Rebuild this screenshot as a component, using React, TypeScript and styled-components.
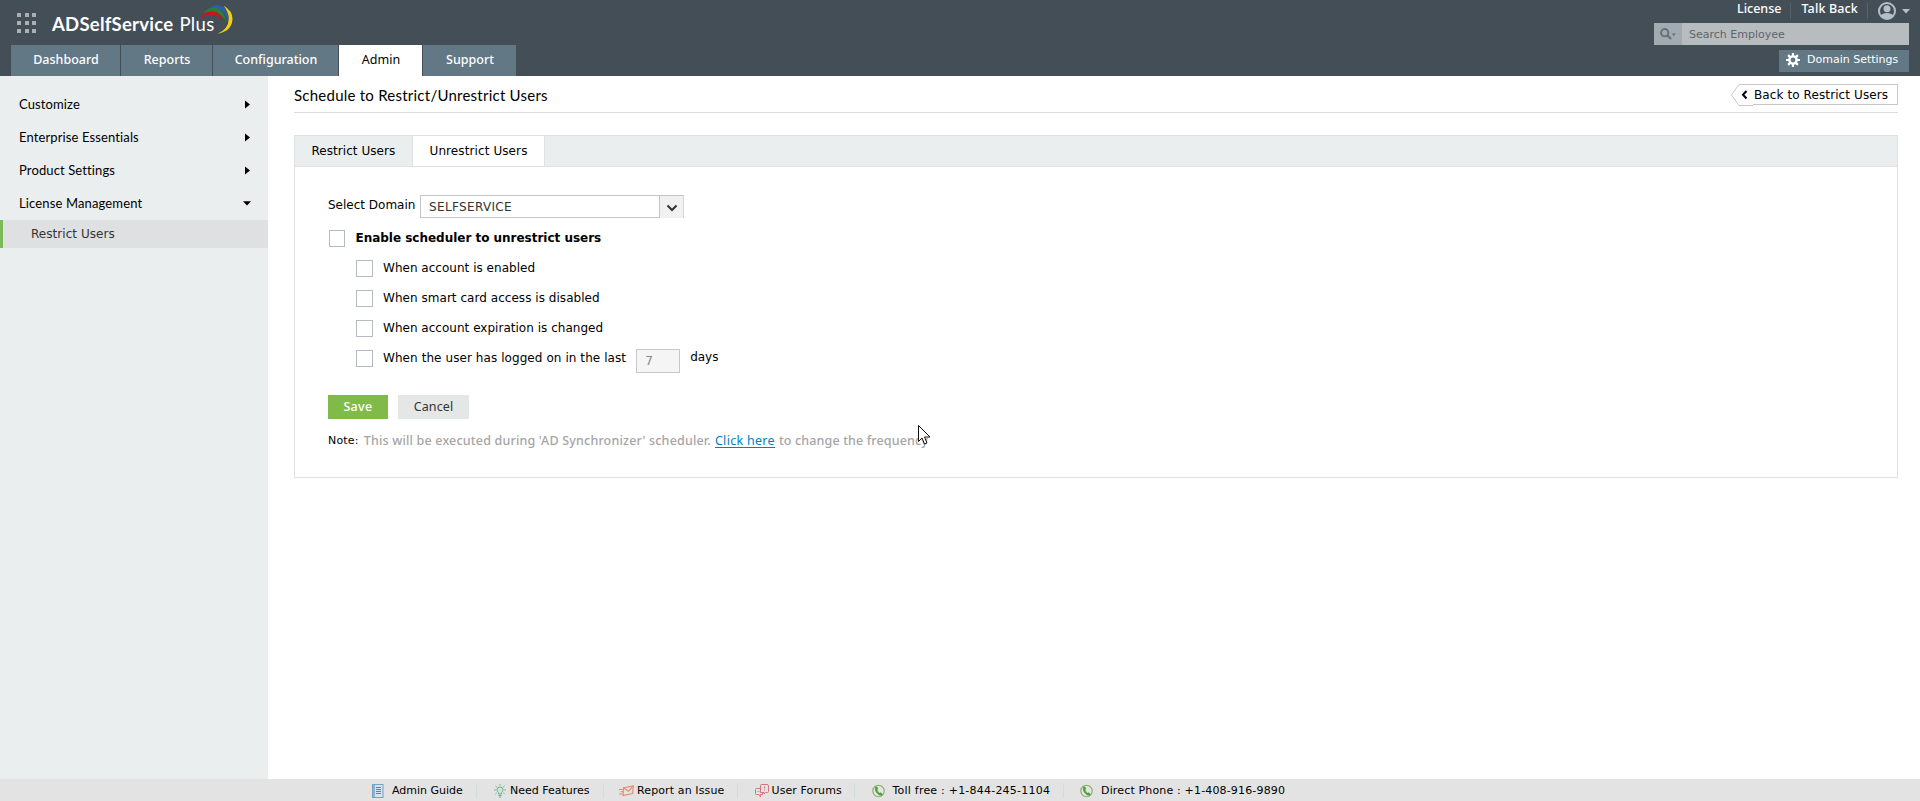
import React from "react";
import styled, { createGlobalStyle } from "styled-components";

const verdana = `"DejaVu Sans", "Liberation Sans", sans-serif`;
const lato = `Lato, "Liberation Sans", sans-serif`;
const tahoma = `"Noto Sans", "Open Sans", sans-serif`;

const GlobalStyle = createGlobalStyle`
  * { box-sizing: border-box; }
  html, body { margin: 0; padding: 0; }
  body { background: #fff; font: 12px/16px ${verdana}; color: #000; overflow: hidden; }
`;

const Page = styled.div`height: 801px; display: flex; flex-direction: column;`;

const Label = styled.span<{ $ls?: number; $size?: number; $font?: string; $weight?: number; $color?: string }>`
  white-space: nowrap;
  letter-spacing: ${p => p.$ls ?? 0}px;
  font-size: ${p => p.$size ?? 12}px;
  font-family: ${p => p.$font ?? verdana};
  font-weight: ${p => p.$weight ?? 400};
  ${p => p.$color && `color: ${p.$color};`}
`;

/* ---------- header ---------- */
const Header = styled.header`
  height: 76px; flex: none; background: #434e56; color: #fff;
  display: flex; justify-content: space-between;
`;
const HeaderLeft = styled.div`display: flex; flex-direction: column; justify-content: space-between; padding-left: 11px;`;
const Brand = styled.div`height: 45px; display: flex; align-items: flex-start; padding-left: 6px;`;
const AppGrid = styled.div`
  margin-top: 13px; width: 19px; display: grid; grid-template-columns: repeat(3, 4px);
  grid-auto-rows: 4px; gap: 4px 3.5px;
`;
const Dot = styled.i`background: #a9afb5;`;
const BrandName = styled.div`margin: 12px 0 0 16px; height: 24px; line-height: 24px; display: flex; gap: 6px;`;
const Swirl = styled.svg`margin: 4px 0 0 -16px;`;
const Tabs = styled.nav`display: flex; gap: 1px; height: 31px;`;
const Tab = styled.a<{ $w: number; $active?: boolean }>`
  width: ${p => p.$w}px; height: 31px; padding: 0 0 2px 1px; display: flex; align-items: center; justify-content: center;
  background: ${p => (p.$active ? "#fff" : "#627885")}; color: ${p => (p.$active ? "#000" : "#fff")};
`;
const HeaderRight = styled.div`display: flex; flex-direction: column; align-items: flex-end; padding-right: 11px;`;
const UserBar = styled.div`height: 23px; display: flex; align-items: flex-start; padding-top: 1px; margin-right: -1px;`;
const BarSep = styled.i<{ $l: number; $r: number }>`
  width: 1px; height: 16px; margin: 2px ${p => p.$r}px 0 ${p => p.$l}px; background: #56626a;
`;
const Search = styled.div`width: 255px; height: 22px; display: flex; background: #b7bcbf;`;
const SearchIcon = styled.div`width: 28px; background: #a2abb0; display: flex; align-items: center; justify-content: center;`;
const SearchText = styled.div`padding: 3px 0 0 7px;`;
const DomainButton = styled.div`
  width: 130px; height: 22px; margin-top: 5px; padding: 0 0 2px 7px; background: #627885;
  display: flex; align-items: center; gap: 7px;
`;

/* ---------- body ---------- */
const Body = styled.div`flex: 1; display: flex; min-height: 0;`;
const Sidebar = styled.aside`width: 268px; background: #eaeeef; padding-top: 12px;`;
const MenuItem = styled.div`height: 33px; padding: 0 17px 0 19px; display: flex; align-items: center; justify-content: space-between;`;
const MenuText = styled.div`padding-bottom: 1px;`;
const SubItem = styled.div`
  height: 28px; background: #dfe0e1; border-left: 3px solid #7cb958; padding: 0 0 1px 28px;
  display: flex; align-items: center;
`;
const Arrow = styled.svg<{ $open?: boolean }>`display: block; margin-right: ${p => (p.$open ? 0 : 1)}px;`;
const Main = styled.main`flex: 1; padding: 0 22px 0 26px;`;
const TitleBar = styled.div`
  height: 37px; border-bottom: 1px solid #ddd; display: flex; justify-content: space-between;
`;
const Title = styled.div`padding-top: 9px; line-height: 20px;`;
const Back = styled.div`margin-top: 8px; width: 167px; height: 22px; display: flex;`;
const BackBody = styled.div`
  flex: 1; height: 21px; border: 1px solid #c8c8c8; border-left: 0;
  display: flex; align-items: center; padding-left: 1px;
`;

const Panel = styled.section`margin-top: 22px; height: 343px; border: 1px solid #e0e1e1;`;
const PanelTabs = styled.div`height: 31px; background: #eaeeef; border-bottom: 1px solid #e0e1e1; display: flex;`;
const PanelTab = styled.div<{ $w: number; $active?: boolean }>`
  width: ${p => p.$w}px; height: 30px; padding: 7px 0 0 16.500px;
  background: ${p => (p.$active ? "#fff" : "transparent")};
  ${p => p.$active && "border: 1px solid #e0e1e1; border-width: 0 1px;"}
`;
const Form = styled.div`padding: 28px 0 0 33px;`;
const DomainRow = styled.div`height: 24px; display: flex; gap: 5px;`;
const FieldLabel = styled.div`width: 87px; padding-top: 2px;`;
const Select = styled.div`
  width: 264px; height: 23px; border: 1px solid #c3c6c8; border-right-color: #d4d6d8; display: flex;
`;
const SelectValue = styled.div`flex: 1; padding: 3px 0 0 8px;`;
const SelectButton = styled.div`
  width: 24px; height: 22px; background: #f1f1f1; border-left: 1px solid #c3c6c8;
  display: flex; align-items: center; justify-content: center; padding-top: 2px;
`;
const Checks = styled.div`padding-top: 11px; height: 176px;`;
const CheckRow = styled.div<{ $sub?: boolean }>`
  height: 30px; display: flex; align-items: flex-start; padding-left: ${p => (p.$sub ? 28 : 1)}px;
`;
const Box = styled.span<{ $w: number }>`
  width: ${p => p.$w}px; height: 17px; border: 1px solid #b5babf; background: #fff; flex: none;
  margin-right: ${p => (p.$w === 16 ? 10.5 : 10)}px;
`;
const DaysInput = styled.div`
  width: 44px; height: 24px; margin: -1px 10px 0 10px; border: 1px solid #c5c8ca; background: #f5f5f5;
  padding: 3px 0 0 8px;
`;
const Days = styled.div`margin-top: -1px;`;
const Buttons = styled.div`display: flex; gap: 10px;`;
const Button = styled.div<{ $primary?: boolean }>`
  width: ${p => (p.$primary ? 60 : 71)}px; height: 24px; display: flex; align-items: center; justify-content: center;
  background: ${p => (p.$primary ? "#80bb4a" : "#e4e7e6")};
`;
const Note = styled.div`position: relative; margin-top: 14px; display: flex;`;
const NoteBody = styled.div`margin-left: 5px; display: flex; color: #a5a5a5;`;
const NoteLink = styled.a`color: #0080c0; border-bottom: 1px solid #0080c0; height: 15px; margin: 0 4px; display: flex;`;
const Cursor = styled.svg`position: absolute; left: 590px; top: -8px;`;

/* ---------- footer ---------- */
const Footer = styled.footer`
  height: 22px; flex: none; background: #e3e3e3; display: flex; align-items: center; padding: 1px 0 0 371px;
`;
const FootItem = styled.div<{ $w: number; $gap: number }>`
  width: ${p => p.$w}px; height: 16px; display: flex; align-items: center; flex: none;
  svg { flex: none; margin-right: ${p => p.$gap}px; }
`;
const FootSep = styled.i<{ $r: number }>`
  width: 1px; height: 15px; background: #d0dcdd; margin-right: ${p => p.$r}px; flex: none;
`;

const BookIcon = () => (
  <svg width="13" height="14" viewBox="0 0 13 14" fill="none" stroke="#6fa3c8">
    <rect x="1.500" y=".5" width="10.500" height="13" fill="#d3e4f0" />
    <path d="M3 1v12" strokeWidth="1.500" />
    <path d="M5 3.500h5M5 5.500h5M5 7.500h5M5 9.500h5" stroke="#4d86b3" />
  </svg>
);
const BulbIcon = () => (
  <svg width="12" height="14" viewBox="0 0 12 14" fill="none" stroke="#68b08c">
    <path d="M4.500 10V8.500Q3 7.500 3 5.700Q3 3 6 3Q9 3 9 5.700Q9 7.500 7.500 8.500V10Z" fill="#cfe3d8" />
    <path d="M4.500 11.500h3M5 13h2M6 0v1.500M0 6h1.700M10.300 6H12M1.500 2l1.300 1M10.500 2L9.200 3M1.500 9.800l1.200-.8M10.500 9.800L9.300 9" />
  </svg>
);
const MailIcon = () => (
  <svg width="15" height="12" viewBox="0 0 15 12" fill="none" stroke="#e88a68" strokeWidth="1.100">
    <path d="M4.500 2.800L14.300 1L13.500 8.500L4 10.500Z" />
    <path d="M4.500 2.800L9.500 6.200L14.300 1M0 4.500h3.500M1.500 6.800h2.500M0 9h3.500" />
  </svg>
);
const ForumIcon = () => (
  <svg width="14" height="14" viewBox="0 0 14 14" fill="none" stroke="#d4757d">
    <path d="M5.500 1.500Q5.500 .5 6.500 .5H12Q13.500 .5 13.500 2V7.500Q13.500 8.500 12.500 8.500H10.500L9 10V8.500H5.500Z" />
    <path d="M5.500 4.500H1.500Q.5 4.500 .5 5.500V9.500Q.5 10.500 1.500 10.500H4L5.500 13V10.500H7.500V8.500" />
    <path d="M9.500 2.500v2M9.500 5.500v1M2.500 7.500h1M4.500 7.500h1" />
  </svg>
);
const PhoneIcon = () => (
  <svg width="13" height="14" viewBox="0 0 13 14" fill="none">
    <circle cx="6.500" cy="7" r="5.700" stroke="#7db45a" strokeWidth="1.100" />
    <path d="M3.300 3.200L5 2.800L5.800 5L4.900 6Q5.600 8 7.600 9.200L8.800 8.700L10.500 10.200L9.600 11.500Q6.500 11.600 4.500 8.600Q2.600 6 3.300 3.200Z" fill="#4d9a3c" stroke="#4d9a3c" strokeWidth=".5" />
  </svg>
);

const menu = ["Customize", "Enterprise Essentials", "Product Settings"];
const conditions = [
  { text: "When account is enabled", ls: 0.02 },
  { text: "When smart card access is disabled", ls: 0.04 },
  { text: "When account expiration is changed", ls: 0.02 },
];

export default function App() {
  return (
    <Page>
      <GlobalStyle />
      <Header>
        <HeaderLeft>
          <Brand>
            <AppGrid>{Array.from({ length: 9 }, (_, i) => <Dot key={i} />)}</AppGrid>
            <BrandName>
              <Label $font={lato} $size={18.5} $weight={700} $ls={0.25}>ADSelfService</Label>
              <Label $font={lato} $size={18.5} $ls={0.4}>Plus</Label>
            </BrandName>
            <Swirl width="34" height="32" viewBox="0 0 34 32">
              <path d="M1 15.500Q7 4.500 15 6.500Q21 8.500 23.500 16.500Q18 11 12 10.800Q6 11 1 15.500Z" fill="#c4161c" />
              <path d="M4 9.500Q12 .5 19 4Q25.500 8 27.500 17.500Q22 10 16 7.800Q10 6.500 4 9.500Z" fill="#2d7d3a" />
              <path d="M11 2.500Q19 -1 25.500 3.500Q30.500 9 29.800 19Q27 10 22 6Q17 3 11 2.500Z" fill="#2d5fa5" />
              <path d="M24.500 1.500Q33.700 7 33.500 15Q33 27 18.500 29.800Q29.500 25 29.800 15Q29.800 8 24.500 1.500Z" fill="#f0d010" />
            </Swirl>
          </Brand>
          <Tabs>
            <Tab $w={109}><Label $font={tahoma} $size={12.5} $weight={500}>Dashboard</Label></Tab>
            <Tab $w={91}><Label $font={tahoma} $size={12.5} $weight={500}>Reports</Label></Tab>
            <Tab $w={125}><Label $font={tahoma} $size={12.5} $weight={500}>Configuration</Label></Tab>
            <Tab $w={83} $active><Label $font={tahoma} $size={12.5}>Admin</Label></Tab>
            <Tab $w={93}><Label $font={tahoma} $size={12.5} $weight={500}>Support</Label></Tab>
          </Tabs>
        </HeaderLeft>
        <HeaderRight>
          <UserBar>
            <Label $font={tahoma} $size={12.5} $weight={500}>License</Label>
            <BarSep $l={9} $r={10} />
            <Label $font={tahoma} $size={12.5} $weight={500} $ls={0.15}>Talk Back</Label>
            <BarSep $l={9} $r={9} />
            <svg width="33" height="20" viewBox="0 0 33 20">
              <circle cx="10" cy="10" r="8" fill="none" stroke="#b4bfc6" strokeWidth="2" />
              <circle cx="10" cy="7.800" r="3.500" fill="#b4bfc6" />
              <path d="M3.600 14.500Q5.500 12 10 12Q14.500 12 16.400 14.500Q14 18 10 18Q6 18 3.600 14.500Z" fill="#b4bfc6" />
              <path d="M25 8h8l-4 4.500z" fill="#b4bfc6" />
            </svg>
          </UserBar>
          <Search>
            <SearchIcon>
              <svg width="16" height="12" viewBox="0 0 16 12" fill="none">
                <circle cx="4.700" cy="4.700" r="3.600" stroke="#667078" strokeWidth="2" />
                <path d="M7.300 7.300L11 11" stroke="#667078" strokeWidth="2.200" />
                <path d="M11.500 5.500h4.500l-2.200 2.500z" fill="#667078" />
              </svg>
            </SearchIcon>
            <SearchText><Label $size={11} $color="#5f666b">Search Employee</Label></SearchText>
          </Search>
          <DomainButton>
            <svg width="14" height="14" viewBox="0 0 14 14" fill="none" stroke="#fff">
              <circle cx="7" cy="7" r="3.600" strokeWidth="2.400" />
              <path d="M7 0v3M7 11v3M0 7h3M11 7h3M2.100 2.100l2 2M9.900 9.900l2 2M2.100 11.900l2-2M9.900 4.100l2-2" strokeWidth="2.200" />
            </svg>
            <Label $size={11}>Domain Settings</Label>
          </DomainButton>
        </HeaderRight>
      </Header>
      <Body>
        <Sidebar>
          {menu.map(m => (
            <MenuItem key={m}>
              <MenuText><Label $font={lato} $size={13} $ls={0.12}>{m}</Label></MenuText>
              <Arrow width="5" height="9" viewBox="0 0 5 9"><path d="M0 .5L5 4.500L0 8.500Z" /></Arrow>
            </MenuItem>
          ))}
          <MenuItem>
            <MenuText><Label $font={lato} $size={13} $ls={0.14}>License Management</Label></MenuText>
            <Arrow $open width="8" height="5" viewBox="0 0 8 5"><path d="M0 .3H8L4 4.500Z" /></Arrow>
          </MenuItem>
          <SubItem><Label $color="#333" $ls={0.05}>Restrict Users</Label></SubItem>
        </Sidebar>
        <Main>
          <TitleBar>
            <Title><Label $font={lato} $size={15} $ls={0.24}>Schedule to Restrict/Unrestrict Users</Label></Title>
            <Back>
              <svg width="22" height="22" viewBox="0 0 22 22" fill="none">
                <path d="M22 .5H8L.5 11L8 21.500H22" stroke="#c8c8c8" />
                <path d="M15.500 7L12 10.800L15.500 14.500" stroke="#000" strokeWidth="2" />
              </svg>
              <BackBody><Label $ls={0.1}>Back to Restrict Users</Label></BackBody>
            </Back>
          </TitleBar>
          <Panel>
            <PanelTabs>
              <PanelTab $w={117}><Label $ls={0.05}>Restrict Users</Label></PanelTab>
              <PanelTab $w={133} $active><Label $ls={0.1}>Unrestrict Users</Label></PanelTab>
            </PanelTabs>
            <Form>
              <DomainRow>
                <FieldLabel><Label>Select Domain</Label></FieldLabel>
                <Select>
                  <SelectValue><Label $color="#333" $ls={0.35}>SELFSERVICE</Label></SelectValue>
                  <SelectButton>
                    <svg width="12" height="8" viewBox="0 0 12 8" fill="none">
                      <path d="M1.500 1.500L6 6L10.500 1.500" stroke="#333" strokeWidth="2" />
                    </svg>
                  </SelectButton>
                </Select>
              </DomainRow>
              <Checks>
                <CheckRow><Box $w={16} /><Label $weight={700} $ls={-0.02}>Enable scheduler to unrestrict users</Label></CheckRow>
                {conditions.map(c => (
                  <CheckRow $sub key={c.text}><Box $w={17} /><Label $ls={c.ls}>{c.text}</Label></CheckRow>
                ))}
                <CheckRow $sub>
                  <Box $w={17} /><Label $ls={0.075}>When the user has logged on in the last</Label>
                  <DaysInput><Label $color="#888">7</Label></DaysInput>
                  <Days><Label>days</Label></Days>
                </CheckRow>
              </Checks>
              <Buttons>
                <Button $primary><Label $font={tahoma} $size={12.5} $weight={500} $ls={0.35} $color="#fff">Save</Label></Button>
                <Button><Label $font={tahoma} $size={12.5} $ls={0.1} $color="#333">Cancel</Label></Button>
              </Buttons>
              <Note>
                <Label $size={11} $ls={0.2}>Note:</Label>
                <NoteBody>
                  <Label $font={tahoma} $size={12.5} $weight={500} $ls={0.18}>This will be executed during 'AD Synchronizer' scheduler.</Label>
                  <NoteLink><Label $font={tahoma} $size={12.5} $ls={0.3}>Click here</Label></NoteLink>
                  <Label $font={tahoma} $size={12.5} $weight={500} $ls={0.14}>to change the frequency</Label>
                </NoteBody>
                <Cursor width="13" height="20" viewBox="0 0 13 20">
                  <path d="M.5 .5V16.500L4 13L6.500 19L9 18L6.500 12H12Z" fill="#fff" stroke="#111" />
                </Cursor>
              </Note>
            </Form>
          </Panel>
        </Main>
      </Body>
      <Footer>
        <FootItem $w={105} $gap={8}><BookIcon /><Label $size={11}>Admin Guide</Label></FootItem>
        <FootSep $r={17} />
        <FootItem $w={109} $gap={4}><BulbIcon /><Label $size={11}>Need Features</Label></FootItem>
        <FootSep $r={15} />
        <FootItem $w={118} $gap={3}><MailIcon /><Label $size={11} $ls={0.12}>Report an Issue</Label></FootItem>
        <FootSep $r={17} />
        <FootItem $w={99} $gap={2.5}><ForumIcon /><Label $size={11} $ls={0.1}>User Forums</Label></FootItem>
        <FootSep $r={17} />
        <FootItem $w={191} $gap={7.5}><PhoneIcon /><Label $size={11} $ls={0.22}>Toll free : +1-844-245-1104</Label></FootItem>
        <FootSep $r={16} />
        <FootItem $w={210} $gap={8}><PhoneIcon /><Label $size={11} $ls={0.16}>Direct Phone : +1-408-916-9890</Label></FootItem>
      </Footer>
    </Page>
  );
}
